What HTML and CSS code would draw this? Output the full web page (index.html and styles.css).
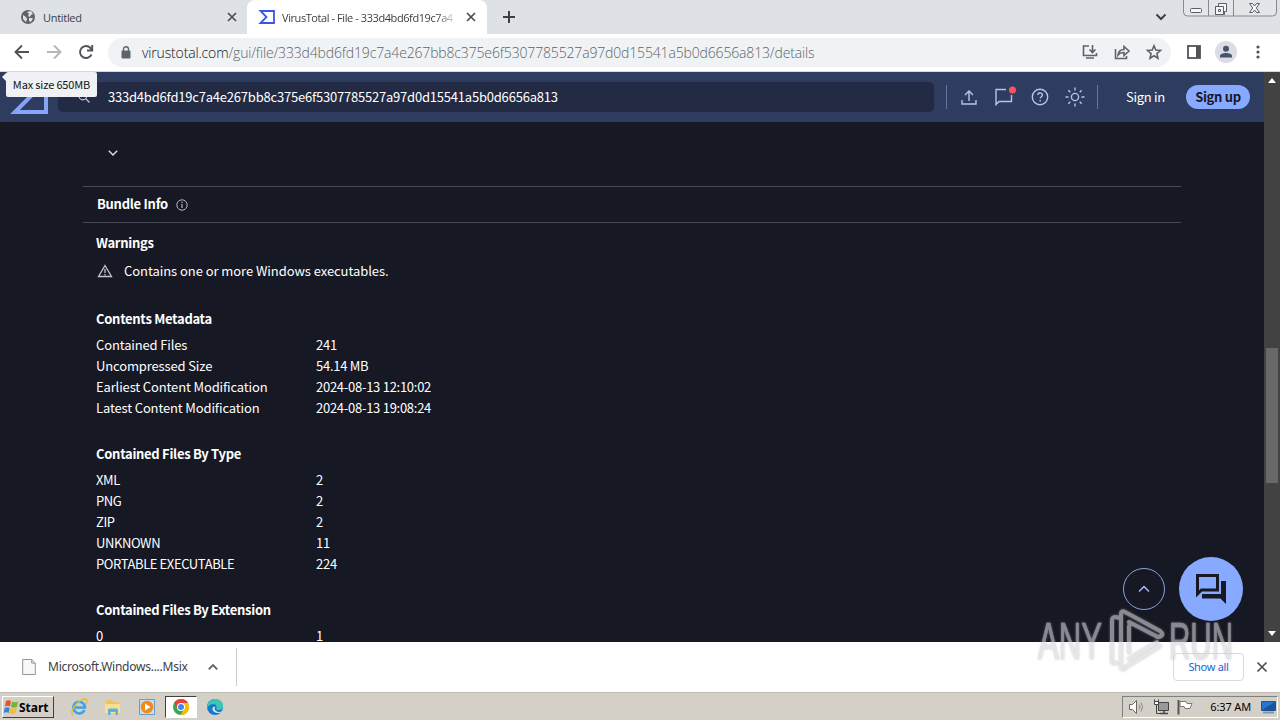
FILE: index.html
```html
<!DOCTYPE html>
<html lang="en">
<head>
	<meta charset="utf-8">
	<title>VirusTotal - File</title>
	<link rel="stylesheet" href="styles.css">
</head>
<body>

	<!-- browser tabs -->
	<div class="tabs">
		<div class="tab">
			<svg width="14" height="14" viewBox="0 0 14 14"><circle cx="7" cy="7" r="7" fill="#5f6368"/><path d="M2 5l3 2 1 2-1 3-3-3zM6 2l4-1 2 3-2 1-1 2-2-1 1-2zM8 8l4 0-2 4-2-1z" fill="#dee1e6"/></svg>
			<span class="tab-title">Untitled</span>
			<svg class="cross" width="10" height="10" viewBox="0 0 10 10"><path d="M1 1l8 8M9 1l-8 8"/></svg>
		</div>
		<div class="tab active">
			<svg width="16" height="16" viewBox="0 0 16 16"><path d="M1.500 2H15V14H1.500L7.500 8z" fill="none" stroke="#3b55e6" stroke-width="1.800"/></svg>
			<span class="tab-title fade">VirusTotal - File - 333d4bd6fd19c7a4</span>
			<svg class="cross" width="10" height="10" viewBox="0 0 10 10"><path d="M1 1l8 8M9 1l-8 8"/></svg>
		</div>
		<svg class="plus" width="12" height="12" viewBox="0 0 12 12"><path d="M6 0v12M0 6h12"/></svg>
		<svg class="tab-search" width="10" height="6" viewBox="0 0 10 6"><path d="M.5.5L5 5 9.500.5"/></svg>
		<svg class="win-buttons" width="94" height="18" viewBox="0 0 94 18"><path d="M.5-1v14q0 4 4 4h85q4 0 4-4V-1" fill="#e3e5e9" stroke="#858991"/><path d="M25.500 0v17M50.500 0v17" stroke="#858991"/><g fill="#f5f5f5" stroke="#5a5e66"><rect x="7.500" y="9.500" width="11" height="4" rx="1"/><path d="M35.500 4.500h8v8h-2v3h-9v-8h3z"/><path d="M32.500 7.500h8v8h-8zM35.500 10.500h2v2h-2z"/><path d="M66.500 4.500h3l2 2.500 2-2.500h3l-3.200 4.500 3.200 4.500h-3l-2-2.500-2 2.500h-3l3.200-4.500z"/></g></svg>
	</div>

	<!-- address bar -->
	<div class="toolbar">
		<svg class="nav" width="16" height="16" viewBox="0 0 16 16"><path d="M15 8H2M8 1.500L1.500 8 8 14.500"/></svg>
		<svg class="nav off" width="16" height="16" viewBox="0 0 16 16"><path d="M1 8h13M8 1.500L14.500 8 8 14.500"/></svg>
		<svg class="nav" width="16" height="16" viewBox="0 0 16 16"><path d="M13.500 10.500A6 6 0 1 1 12.500 4L14 5.500M14.200 1v5.500H9"/></svg>
		<div class="omnibox">
			<svg width="10" height="13" viewBox="0 0 10 13"><rect x="0.500" y="4.500" width="9" height="8" rx="1" fill="#5f6368"/><path d="M2.500 5V3.200a2.500 2.500 0 0 1 5 0V5" fill="none" stroke="#5f6368" stroke-width="1.400"/></svg>
			<span class="url"><b>virustotal.com</b>/gui/file/333d4bd6fd19c7a4e267bb8c375e6f5307785527a97d0d15541a5b0d6656a813/details</span>
			<svg class="line" width="16" height="16" viewBox="0 0 16 16"><path d="M7 2H1.500v9.500h13V9M10.500 1v7M7.500 5.500l3 3 3-3M4 14h8"/></svg>
			<svg class="line" width="16" height="16" viewBox="0 0 16 16"><path d="M1.500 5v9.500h11V12M4 11c.5-4 3-5.500 6-5.500V2.500l5 4.500-5 4.500V8.500c-3 0-4.500.5-6 2.500z" stroke-width="1.200"/></svg>
			<svg class="line" width="16" height="16" viewBox="0 0 16 16"><path d="M8 1.800l1.800 4.300 4.700.4-3.600 3.100 1.100 4.600-4-2.500-4 2.500 1.100-4.600L1.500 6.500l4.700-.4z" stroke-width="1.400"/></svg>
		</div>
		<svg class="panel-icon" width="14" height="14" viewBox="0 0 14 14"><rect x="1" y="1" width="12" height="12" fill="none" stroke="#505459" stroke-width="1.800"/><path d="M9 1h4v12H9z" fill="#505459"/></svg>
		<svg class="avatar" width="22" height="22" viewBox="0 0 22 22"><circle cx="11" cy="11" r="11" fill="#dadde3"/><circle cx="11" cy="7.800" r="3" fill="#48546f"/><path d="M5 16.500v-1.500c0-4 12-4 12 0v1.500z" fill="#48546f"/></svg>
		<svg class="dots" width="4" height="14" viewBox="0 0 4 14"><g fill="#505459"><circle cx="2" cy="2" r="1.600"/><circle cx="2" cy="7" r="1.600"/><circle cx="2" cy="12" r="1.600"/></g></svg>
	</div>

	<div class="viewport">
		<div class="page">
			<div class="header">
				<svg class="logo" width="38" height="34" viewBox="0 0 38 34"><path d="M5 2H36V32H5L20 17z" fill="none" stroke="#87a5f8" stroke-width="4"/></svg>
				<div class="search">
					<svg width="12" height="12" viewBox="0 0 12 12"><path d="M8 8l3.500 3.500M1 5a3.800 3.800 0 1 0 7.600 0A3.800 3.800 0 1 0 1 5z" fill="none" stroke="#c3cbe0" stroke-width="1.200"/></svg>
					<span>333d4bd6fd19c7a4e267bb8c375e6f5307785527a97d0d15541a5b0d6656a813</span>
				</div>
				<div class="actions">
					<svg width="20" height="20" viewBox="0 0 20 20"><path d="M10 14V4M6 8l4-4 4 4M3 13v4h14v-4"/></svg>
					<svg width="20" height="20" viewBox="0 0 20 20"><path d="M12 2.500H2v15l3-3h12.500V8"/><circle cx="18.500" cy="3" r="3.500" class="badge"/></svg>
					<svg width="20" height="20" viewBox="0 0 20 20"><circle cx="10" cy="10" r="7.700"/><path d="M7.800 8c0-3 4.600-2.800 4.600 0 0 1.700-2.200 1.800-2.200 3.600M10.200 13v1.500"/></svg>
					<svg width="20" height="20" viewBox="0 0 20 20"><circle cx="10" cy="10" r="3.600"/><path d="M10 .5v3M10 16.500v3M.5 10h3M16.500 10h3M3.300 3.300l2 2M14.700 14.700l2 2M16.700 3.300l-2 2M5.300 14.700l-2 2"/></svg>
				</div>
				<span class="sign-in">Sign in</span>
				<span class="sign-up">Sign up</span>
			</div>

			<div class="details">
				<svg class="expand" width="10" height="6" viewBox="0 0 10 6"><path d="M.8.8L5 5 9.200.8"/></svg>
				<div class="section-title">
					<span>Bundle Info</span>
					<svg width="12" height="12" viewBox="0 0 12 12"><circle cx="6" cy="6" r="5.200" fill="none" stroke="#b4b6c0"/><path d="M6 5v4M6 2.700v1.300" stroke="#b4b6c0" stroke-width="1.200"/></svg>
				</div>
				<div class="bundle">
					<h3 class="warnings">Warnings</h3>
					<p class="warning">
						<svg width="16" height="14" viewBox="0 0 16 14"><path d="M8 1.500L14.500 12.500H1.500zM8 5v4M8 10v1.300" fill="none" stroke="#c4c6ce" stroke-width="1.300"/></svg>
						<span>Contains one or more Windows executables.</span>
					</p>

					<h3>Contents Metadata</h3>
					<dl>
						<dt>Contained Files</dt><dd>241</dd>
						<dt>Uncompressed Size</dt><dd>54.14 MB</dd>
						<dt>Earliest Content Modification</dt><dd>2024-08-13 12:10:02</dd>
						<dt>Latest Content Modification</dt><dd>2024-08-13 19:08:24</dd>
					</dl>

					<h3>Contained Files By Type</h3>
					<dl class="types">
						<dt>XML</dt><dd>2</dd>
						<dt>PNG</dt><dd>2</dd>
						<dt>ZIP</dt><dd>2</dd>
						<dt>UNKNOWN</dt><dd>11</dd>
						<dt>PORTABLE EXECUTABLE</dt><dd>224</dd>
					</dl>

					<h3>Contained Files By Extension</h3>
					<dl>
						<dt>0</dt><dd>1</dd>
					</dl>
				</div>
			</div>
		</div>

		<div class="scrollbar">
			<svg width="16" height="16" viewBox="0 0 16 16"><path d="M4 11l4-5 4 5z" fill="#fff"/></svg>
			<div class="thumb"></div>
			<svg width="16" height="16" viewBox="0 0 16 16"><path d="M4 5l4 5 4-5z" fill="#fff"/></svg>
		</div>

		<!-- tip of the tooltip sticks out at its top left -->
		<svg class="tip" width="4" height="8" viewBox="0 0 4 8"><path d="M4 0v8L0 4z" fill="#f0f1f5"/></svg>
		<div class="tooltip">Max size 650MB</div>
		<div class="to-top"><svg width="12" height="8" viewBox="0 0 12 8"><path d="M1 6.500l5-5 5 5" fill="none" stroke="#a9bdf5" stroke-width="1.500"/></svg></div>
		<div class="chat"><svg width="32" height="32" viewBox="0 0 32 32"><path d="M2.500 2.500h20v14.500h-16l-4 4z" fill="none" stroke="#161824" stroke-width="3"/><path d="M26 8h5v23l-5.500-5.500H7V21h19z" fill="#161824"/></svg></div>
	</div>

	<!-- download shelf -->
	<div class="downloads">
		<div class="download">
			<svg width="14" height="16" viewBox="0 0 14 16"><path d="M.7.5h9l3.600 3.600v11.400H.7z" fill="#f8f8f8" stroke="#969696"/><path d="M9.700.5v3.600h3.600" fill="none" stroke="#969696"/></svg>
			<span>Microsoft.Windows....Msix</span>
			<svg class="up" width="10" height="6" viewBox="0 0 10 6"><path d="M.8 5.300L5 1l4.200 4.300"/></svg>
		</div>
		<span class="show-all">Show all</span>
		<svg class="cross" width="10" height="10" viewBox="0 0 10 10"><path d="M.5.5l9 9M9.500.5l-9 9"/></svg>
	</div>

	<div class="taskbar">
		<div class="start">
			<svg width="16" height="16" viewBox="0 0 16 16"><path d="M3 2q2.500-1.500 5 0L7 7.500q-2.500-1.500-5 0z" fill="#e8532b"/><path d="M9 2.500q3 1.500 6 0L14 8q-3 1.500-6 0z" fill="#72b63b"/><path d="M1.700 9q2.500-1.500 5 0l-1 5q-2.500-1.500-5 0z" fill="#3c83d4"/><path d="M7.700 9q3 1.500 6 0l-1 5q-3 1.500-6 0z" fill="#f5bd2c"/></svg>
			<span>Start</span>
		</div>
		<div class="launch"><svg width="18" height="18" viewBox="0 0 18 18"><path d="M14.500 12A5.800 5.800 0 1 1 15 9.500H5" fill="none" stroke="#3fa2e6" stroke-width="2.600"/><path d="M3 17C-2 15 8 1.500 15 1c3 0 2 3.500 1 5" fill="none" stroke="#e8bd36" stroke-width="1.400"/></svg></div>
		<div class="launch"><svg width="18" height="18" viewBox="0 0 18 18"><path d="M2 4V2h6l1 2h6v4H2z" fill="#e8c565"/><path d="M1 6h15v9H1z" fill="#f7df91"/><path d="M4 17v-5q0-1.500 1.500-1.500h7q1.500 0 1.500 1.500v5h-2.500v-3h-5v3z" fill="#5fb0e2"/></svg></div>
		<div class="launch"><svg width="18" height="18" viewBox="0 0 18 18"><path d="M1.500 1.500h15v15h-15z" fill="#c5dff2" stroke="#6a9cc7"/><circle cx="9" cy="9" r="6.300" fill="#f08a1d"/><path d="M7 5.500v7L12.500 9z" fill="#fff"/></svg></div>
		<div class="launch current"><svg width="18" height="18" viewBox="0 0 18 18"><circle cx="9" cy="9" r="8" fill="#34a853"/><path d="M9 5h7A8 8 0 0 1 8.500 17L12 11z" fill="#fbbc05"/><path d="M2.100 5A8 8 0 0 1 15.900 5H9L5.500 11z" fill="#ea4335"/><circle cx="9" cy="9" r="4" fill="#fff"/><circle cx="9" cy="9" r="3" fill="#4285f4"/></svg></div>
		<div class="launch"><svg width="18" height="18" viewBox="0 0 18 18"><circle cx="9" cy="9" r="8" fill="#1877c9"/><path d="M2 5.500Q5 1 9 1q8 0 8 8-.5 3.500-5 3-2.500-.5-1.500-2Q11 6 7 6 4 6 1 10q0-2.500 1-4.500z" fill="#3cc6b3"/><path d="M6.500 10q-.5 4 4.500 5 3 .5 5-1.500-4 1-6-.5-2.500-2-.5-4-2-1-3 1z" fill="#d4e7ee"/></svg></div>
		<div class="tray">
			<svg width="18" height="16" viewBox="0 0 18 16"><path d="M1.500 5.500h3l4-4v13l-4-4h-3z" fill="#fff" stroke="#666"/><path d="M11 5.500q2 2.500 0 5M13 3.500q3 4.500 0 9" fill="none" stroke="#888"/></svg>
			<svg width="17" height="16" viewBox="0 0 17 16"><path d="M5.500 3.500h10v8h-10z" fill="#999" stroke="#444"/><path d="M7 14.500h8M11 12v2" stroke="#444" stroke-width="1.500"/><path d="M1.500.5v4h4v-4M3.500 4.500v10h5" fill="none" stroke="#444"/><path d="M1.500 2.500h4v3h-4z" fill="#fff" stroke="#444"/></svg>
			<svg width="17" height="16" viewBox="0 0 17 16"><path d="M1.500 1v14.500" stroke="#555" stroke-width="2"/><path d="M3 2.500h6l1 2h5l-2 5H8l-1-2H3z" fill="#fff" stroke="#777"/></svg>
			<span class="clock">6:37 AM</span>
			<svg width="16" height="14" viewBox="0 0 16 14"><path d="M.5 1.500h14v9H.5z" fill="#2476ce" stroke="#30517d"/><path d="M1 10L14 2v8z" fill="#1554a3"/><path d="M2 12.500h11" stroke="#7797b4" stroke-width="2"/></svg>
		</div>
	</div>

	<svg class="watermark" width="196" height="64" viewBox="0 0 196 64">
		<text x="1" y="50" textLength="64" lengthAdjust="spacingAndGlyphs">ANY</text>
		<text x="132" y="50" textLength="64" lengthAdjust="spacingAndGlyphs">RUN</text>
		<path d="M82 9q-7-3-7 3v39q0 4 4 3M84 52V5q0-4 4-2l35 19q4 3 1 5t-5 0L92 13M84 30v22M92 17v26M92 50l28-17M86 60l37-23M84 52q-1 9 3 8"/>
	</svg>
</body>
</html>
```

FILE: styles.css
```css
*{
	margin: 0;
	padding: 0;
	box-sizing: border-box;
}
body{
	width: 1280px;
	height: 720px;
	overflow: hidden;
	position: relative;
	font-family: "Noto Sans", sans-serif;
	font-size: 12px;
	background: #fff;
}
svg{
	display: block;
	flex: none;
	overflow: visible;
}
span{
	white-space: nowrap;
}

/* tabs */
.tabs{
	height: 34px;
	display: flex;
	align-items: center;
	background: #dee1e6;
}
.tab{
	width: 247px;
	height: 34px;
	display: flex;
	align-items: center;
	padding: 0 10px 0 21px;
	color: #3c4043;
}
.tab-title{
	flex: 1;
	margin-left: 8px;
	font-family: "Open Sans", sans-serif;
	font-size: 11px;
	letter-spacing: -0.3px;
	overflow: hidden;
}
.tab.active{
	width: 240px;
	padding: 0 11px 0 12px;
	background: #fff;
	border-radius: 8px 8px 0 0;
}
.active .tab-title{
	margin: 0 8px 0 7px;
	letter-spacing: -0.42px;
}
.fade{
	-webkit-mask-image: linear-gradient(to right, #000 88%, transparent);
	mask-image: linear-gradient(to right, #000 88%, transparent);
}
.cross path{
	stroke: #4b4e52;
	stroke-width: 1.7;
}
.plus{
	margin-left: 16px;
}
.plus path, .tab-search path{
	fill: none;
	stroke: #3c4043;
	stroke-width: 2;
}
.tab-search{
	margin-left: auto;
	margin-right: 17px;
}
.win-buttons{
	align-self: flex-start;
	margin-right: 3px;
	margin-top: -1px;
}

/* toolbar */
.toolbar{
	height: 38px;
	display: flex;
	align-items: center;
	padding: 0 20px 1px 14px;
	border-bottom: 1px solid #d5dae0;
}
.nav{
	margin-right: 16px;
}
.nav path{
	fill: none;
	stroke: #505458;
	stroke-width: 1.9;
}
.nav.off path{
	stroke: #b5b7ba;
}
.omnibox{
	width: 1063px;
	height: 29px;
	margin-left: -2px;
	border-radius: 15px;
	background: #f0f3f5;
	display: flex;
	align-items: center;
	padding: 0 9px 0 13px;
}
.url{
	flex: 1;
	margin-left: 11px;
	font-family: "Open Sans", sans-serif;
	font-weight: 300;
	font-size: 14px;
	letter-spacing: -0.155px;
	color: #5f6368;
}
.url b{
	font-weight: 300;
	color: #111;
}
.line{
	margin-left: 16px;
}
.line path{
	fill: none;
	stroke: #5f6368;
	stroke-width: 1.6;
}
.panel-icon{
	margin-left: 16px;
}
.avatar{
	margin-left: 14px;
}
.dots{
	margin-left: auto;
}

/* page */
.viewport{
	height: 570px;
	display: flex;
	position: relative;
	overflow: hidden;
}
.page{
	width: 1264px;
	background: #161824;
	color: #fff;
	font-family: "Noto Sans CJK SC", sans-serif;
	font-size: 13px;
	line-height: 21px;
}
.header{
	height: 50px;
	display: flex;
	align-items: center;
	padding: 0 14px 0 10px;
	background: #2e3c5f;
}
.logo{
	align-self: flex-start;
	margin-top: 8px;
}
.search{
	width: 876px;
	height: 30px;
	margin-left: 10px;
	padding-left: 20px;
	border-radius: 5px;
	background: #232a43;
	display: flex;
	align-items: center;
}
.search span{
	margin-left: 18px;
	padding-bottom: 1px;
	letter-spacing: -0.21px;
}
.actions{
	width: 152px;
	height: 24px;
	margin-left: 12px;
	padding: 0 12px;
	border-left: 1px solid #6475a0;
	border-right: 1px solid #6475a0;
	display: flex;
	align-items: center;
	gap: 15.3px;
}
.actions path, .actions circle{
	fill: none;
	stroke: #b5c4e9;
	stroke-width: 1.4;
}
.actions .badge{
	fill: #ff5060;
	stroke: none;
}
.sign-in{
	margin-left: 28px;
	padding-bottom: 1px;
	letter-spacing: -0.3px;
}
.sign-up{
	width: 64px;
	height: 24px;
	margin-left: auto;
	border-radius: 12px;
	background: #87a9ff;
	color: #161824;
	font-weight: bold;
	line-height: 24px;
	letter-spacing: -0.3px;
	text-align: center;
}
.details{
	width: 1098px;
	margin-left: 83px;
}
.expand{
	margin: 28px 0 30px 25px;
}
.expand path{
	fill: none;
	stroke: #dfe0e6;
	stroke-width: 1.4;
}
.section-title{
	height: 37px;
	border-top: 1px solid #464854;
	border-bottom: 1px solid #464854;
	display: flex;
	align-items: center;
	gap: 8px;
	padding-left: 14px;
	font-weight: bold;
	letter-spacing: -0.27px;
}
.section-title span{
	padding-bottom: 2px;
}
.bundle{
	padding: 9px 0 0 13px;
}
h3{
	font-size: 13px;
	font-weight: bold;
	letter-spacing: -0.29px;
	margin-bottom: 5px;
}
.warnings{
	margin-bottom: 7px;
}
.warning{
	display: flex;
	align-items: center;
	gap: 11px;
	padding-left: 1px;
	margin-bottom: 27px;
	letter-spacing: -0.06px;
}
dl{
	display: grid;
	grid-template-columns: 220px 1fr;
	margin-bottom: 25px;
}
dt{
	letter-spacing: -0.14px;
}
dd{
	letter-spacing: -0.27px;
}
.types dt{
	letter-spacing: -0.4px;
}

.scrollbar{
	width: 16px;
	display: flex;
	flex-direction: column;
	align-items: center;
	background: #424242;
}
.thumb{
	width: 12px;
	height: 135px;
	margin: 260px 0 auto;
	background: #686868;
}
.tip{
	position: absolute;
	left: 2px;
	top: 1px;
}
.tooltip{
	position: absolute;
	left: 6px;
	top: 0;
	width: 91px;
	height: 25px;
	border-radius: 2px;
	background: #f0f1f5;
	color: #111;
	font-family: "Noto Sans CJK SC", sans-serif;
	font-size: 11px;
	line-height: 25px;
	letter-spacing: -0.15px;
	text-align: center;
}
.to-top, .chat{
	position: absolute;
	display: flex;
	align-items: center;
	justify-content: center;
	border-radius: 50%;
}
.to-top{
	left: 1123px;
	top: 496px;
	width: 42px;
	height: 42px;
	border: 1px solid #8aa1de;
}
.chat{
	left: 1179px;
	top: 485px;
	width: 64px;
	height: 64px;
	background: #87a9ff;
}

/* download shelf */
.downloads{
	height: 50px;
	display: flex;
	align-items: center;
	padding: 0 13px 1px 22px;
}
.download{
	width: 215px;
	height: 38px;
	border-right: 1px solid #c8cacd;
	display: flex;
	align-items: center;
	color: #3c4043;
}
.download span{
	width: 147px;
	margin: 0 13px 0 12px;
	letter-spacing: -0.25px;
}
.up path{
	fill: none;
	stroke: #5f6368;
	stroke-width: 1.8;
}
.show-all{
	width: 71px;
	height: 28px;
	margin: 0 13px 0 auto;
	border: 1px solid #d7dade;
	border-radius: 4px;
	color: #2064cf;
	font-size: 11px;
	line-height: 25px;
	letter-spacing: -0.3px;
	text-align: center;
}

/* taskbar */
.taskbar{
	height: 28px;
	padding: 2px 2px 1px;
	border-top: 1px solid #c1bdb5;
	background: #d4d0c8;
	display: flex;
	align-items: center;
}
.start{
	width: 52px;
	height: 22px;
	margin-right: 9px;
	border: 1px solid;
	border-color: #fff #404040 #404040 #fff;
	display: flex;
	align-items: center;
	color: #000;
	font-weight: bold;
	letter-spacing: 0;
}
.launch{
	width: 32px;
	height: 22px;
	margin-right: 2px;
	display: flex;
	align-items: center;
	justify-content: center;
}
.launch.current{
	background: #fff;
	border: 1px solid;
	border-color: #404040 #fff #fff #404040;
}
.tray{
	width: 156px;
	height: 22px;
	margin-left: auto;
	padding: 0 0 0 5px;
	border: 1px solid;
	border-color: #808080 #fff #fff #808080;
	display: flex;
	align-items: center;
	gap: 7px;
}
.clock{
	margin: 0 3px 0 auto;
	padding-bottom: 1px;
	color: #000;
	font-size: 11px;
	letter-spacing: -0.15px;
}

.watermark{
	position: absolute;
	left: 1037px;
	top: 609px;
	opacity: 0.6;
	filter: drop-shadow(0 0 1px #aaa);
}
.watermark text{
	font-family: "Liberation Sans", sans-serif;
	font-size: 52px;
	fill: #d6d7da;
	stroke: #d6d7da;
	stroke-width: 0.6;
}
.watermark path{
	fill: none;
	stroke: #d6d7da;
	stroke-width: 4;
	stroke-linejoin: round;
	stroke-linecap: round;
}
```
